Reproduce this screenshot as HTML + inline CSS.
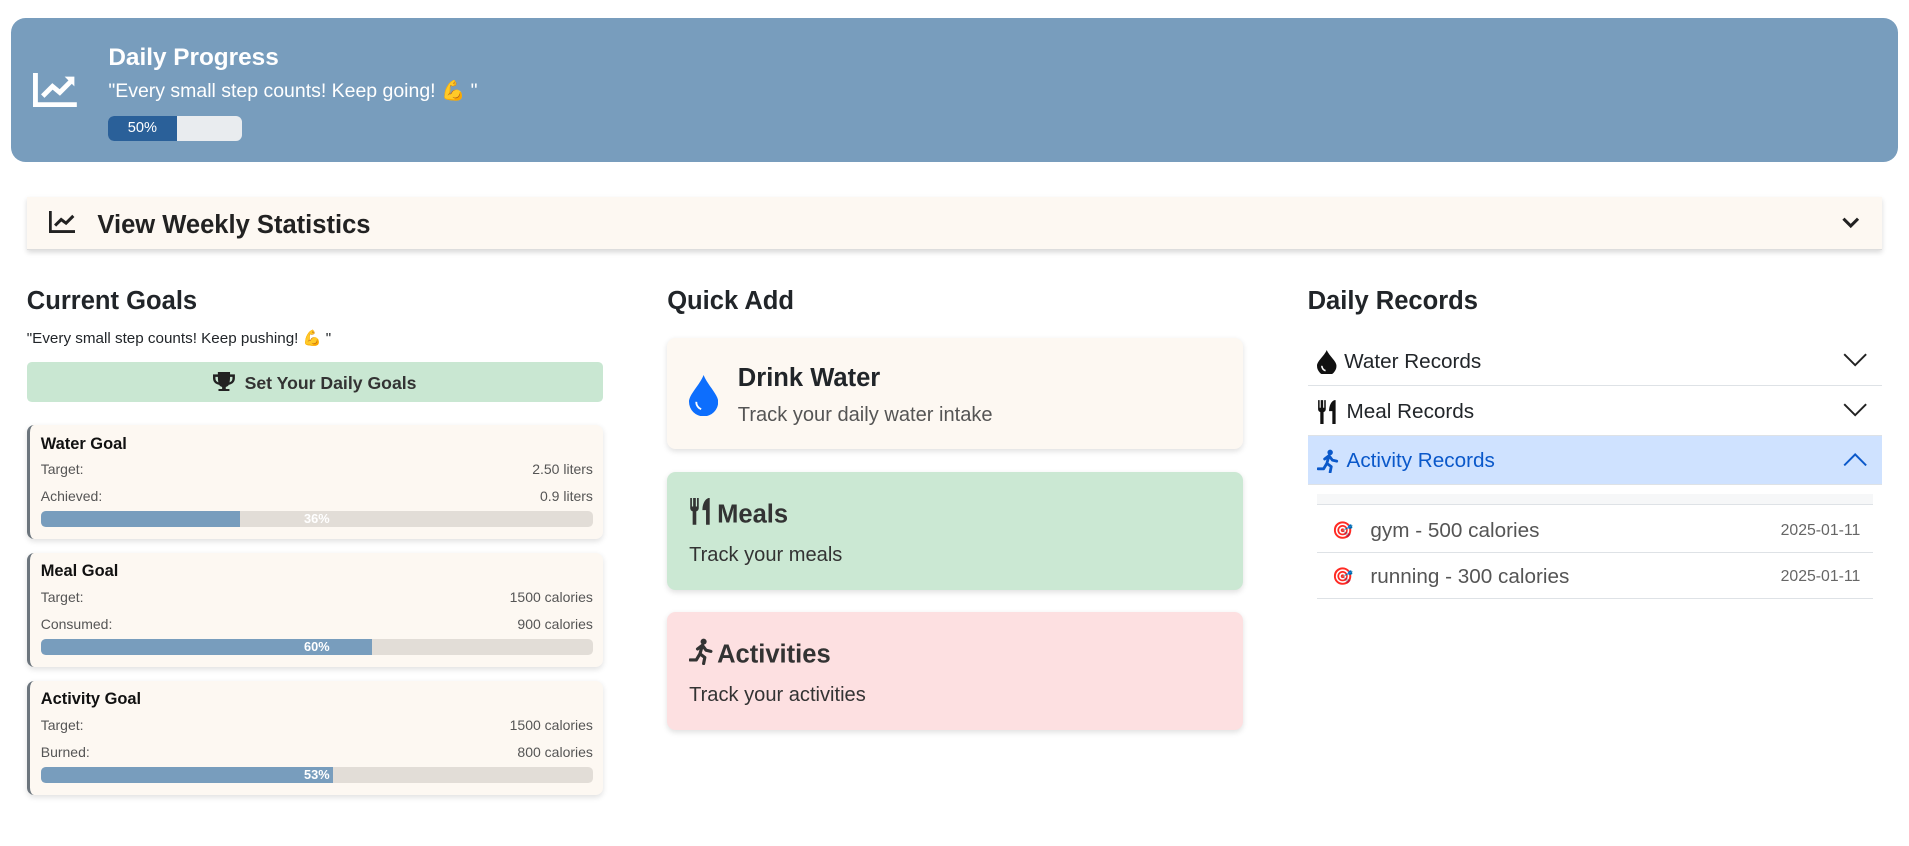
<!DOCTYPE html>
<html><head><meta charset="utf-8"><style>
*{box-sizing:border-box;margin:0;padding:0}
html,body{width:1909px;height:846px;overflow:hidden;background:#fff}
#w{width:1568px;height:695px;position:relative;zoom:1.2175;font-family:"Liberation Sans",sans-serif;color:#212529}
.a{position:absolute}
.hdr{left:9px;top:15px;width:1550px;height:118px;background:#789dbd;border-radius:12px;color:#fff}
.card{background:#fdf8f2;border-radius:6px;box-shadow:0 2px 5px rgba(0,0,0,.12)}
h2{font-size:21px;font-weight:600;position:absolute}
.goal{left:22px;width:473px;height:94px;border-left:3px solid #6c757d}
.goal b{position:absolute;left:9px;top:8px;font-size:13.5px;color:#111}
.goal .r{position:absolute;left:9px;right:8px;font-size:11.5px;color:#555;display:flex;justify-content:space-between}
.bar{position:absolute;left:9px;right:8px;top:71px;height:13px;background:#e2ddd7;border-radius:4px;overflow:hidden}
.bar i{display:block;height:100%;background:#789dbd}
.bar span{position:absolute;left:0;right:0;top:0;text-align:center;font-size:10.5px;line-height:13px;color:#fff;font-weight:bold}
.qa{left:548px;width:473px;border-radius:7px;box-shadow:0 2px 5px rgba(0,0,0,.12)}
.rec{left:1074px;width:472px;height:40px;border-bottom:1px solid #dee2e6;font-size:17px;display:flex;align-items:center;padding-left:8px;padding-top:2px}
.rec svg{margin-right:6px}
.rec svg.c{position:absolute;right:12px;top:13px;margin:0}
.it{left:1082px;width:456px;height:38px;border-bottom:1px solid #dee2e6;font-size:17px;color:#555;display:flex;align-items:center;padding-left:12px;padding-top:3px}
.it .d{position:absolute;right:10px;font-size:13px;color:#666}
.ic{display:inline-block;vertical-align:-2px;margin-right:3px}
</style></head><body><div id="w">
<div class="a hdr">
 <svg class="a" style="left:18px;top:45px" width="36" height="28" viewBox="0 0 36 28"><path d="M2 0v26h34" stroke="#fff" stroke-width="4" fill="none"/><path d="M8 19l8-8 6 5 10-10" stroke="#fff" stroke-width="4" fill="none"/><path d="M26 3h8v8z" fill="#fff"/></svg>
 <div class="a" style="left:80px;top:21px;font-size:20px;font-weight:600">Daily Progress</div>
 <div class="a" style="left:80px;top:50px;font-size:16px">"Every small step counts! Keep going! 💪 "</div>
 <div class="a" style="left:80px;top:80px;width:110px;height:21px;background:#e9ecef;border-radius:5px;overflow:hidden"><div style="width:56px;height:100%;background:#2a6099;font-size:12px;text-align:center;line-height:21px">50%</div></div>
</div>
<div class="a" style="left:22px;top:162px;width:1524px;height:43px;background:#fdf8f2;box-shadow:0 2px 4px rgba(0,0,0,.15);border-bottom:1px solid #ddd">
 <svg class="a" style="left:18px;top:11px" width="22" height="18" viewBox="0 0 22 18"><path d="M1 0v17h21" stroke="#222" stroke-width="2.5" fill="none"/><path d="M5 12l5-5 4 3 6-6" stroke="#222" stroke-width="2.5" fill="none"/></svg>
 <div class="a" style="left:58px;top:11px;font-size:21px;font-weight:600;color:#222">View Weekly Statistics</div>
 <svg class="a" style="left:1490px;top:15px" width="16" height="12" viewBox="0 0 16 12"><path d="M2 3l6 6 6-6" stroke="#222" stroke-width="2.5" fill="none"/></svg>
</div>
<h2 style="left:22px;top:236px">Current Goals</h2>
<div class="a" style="left:22px;top:270px;font-size:12.5px">"Every small step counts! Keep pushing! 💪 "</div>
<div class="a" style="left:22px;top:297px;width:473px;height:33px;background:#c9e7d2;border-radius:4px;font-size:14.5px;font-weight:600;color:#333;text-align:center;line-height:35px"><svg class="ic" width="18" height="16" viewBox="0 0 18 16" style="margin-right:8px"><path d="M4 0h10v2h4v3c0 3-2 5-5 5.5-.6 1-1.5 1.6-2.5 1.8V14h3v2H4.5v-2h3v-1.7C6.5 12.1 5.6 11.5 5 10.5 2 10 0 8 0 5V2h4zM2 4v1c0 2 1 3 2.4 3.5C4.1 7 4 5.5 4 4zm14 0h-2c0 1.5-.1 3-.4 4.5C15 8 16 7 16 5z" fill="#222"/></svg>Set Your Daily Goals</div>
<div class="a card goal" style="top:349px"><b>Water Goal</b><div class="r" style="top:30px"><span>Target:</span><span>2.50 liters</span></div><div class="r" style="top:52px"><span>Achieved:</span><span>0.9 liters</span></div><div class="bar"><i style="width:36%"></i><span>36%</span></div></div>
<div class="a card goal" style="top:454px"><b>Meal Goal</b><div class="r" style="top:30px"><span>Target:</span><span>1500 calories</span></div><div class="r" style="top:52px"><span>Consumed:</span><span>900 calories</span></div><div class="bar"><i style="width:60%"></i><span>60%</span></div></div>
<div class="a card goal" style="top:559px"><b>Activity Goal</b><div class="r" style="top:30px"><span>Target:</span><span>1500 calories</span></div><div class="r" style="top:52px"><span>Burned:</span><span>800 calories</span></div><div class="bar"><i style="width:53%"></i><span>53%</span></div></div>

<h2 style="left:548px;top:236px">Quick Add</h2>
<div class="a qa" style="top:278px;height:91px;background:#fdf8f2">
 <svg class="a" style="left:18px;top:30px" width="24" height="34" viewBox="0 0 24 34"><path d="M12 0C9 8 0 16 0 22a12 12 0 0024 0C24 16 15 8 12 0z" fill="#0d6efd"/><path d="M6 22a6 6 0 004 6" stroke="#fff" stroke-width="1.5" fill="none"/></svg>
 <div class="a" style="left:58px;top:21px;font-size:21px;font-weight:600">Drink Water</div>
 <div class="a" style="left:58px;top:54px;font-size:16.5px;color:#555">Track your daily water intake</div>
</div>
<div class="a qa" style="top:388px;height:97px;background:#cbe8d3">
 <div class="a" style="left:18px;top:21px;font-size:21px;font-weight:600;color:#333"><svg class="ic" width="20" height="22" viewBox="0 0 20 22"><path d="M1 0v8a3 3 0 002 3v11h3V11a3 3 0 002-3V0H6.6v7H5.6V0H3.4v7H2.4V0z" fill="#333"/><path d="M16 0c-3 1-5 5-5 10h3v12h3V0z" fill="#333"/></svg>Meals</div>
 <div class="a" style="left:18px;top:59px;font-size:16.5px;color:#333">Track your meals</div>
</div>
<div class="a qa" style="top:503px;height:97px;background:#fde0e1">
 <div class="a" style="left:18px;top:21px;font-size:21px;font-weight:600;color:#333"><svg class="ic" width="20" height="22" viewBox="0 0 20 22"><circle cx="12" cy="3" r="2.5" fill="#333"/><path d="M7 9l4-3 3 4 4 1M11 6l-2 7 4 3-1 5M9 13l-3 5H1" stroke="#333" stroke-width="2.6" fill="none" stroke-linecap="round" stroke-linejoin="round"/></svg>Activities</div>
 <div class="a" style="left:18px;top:59px;font-size:16.5px;color:#333">Track your activities</div>
</div>

<h2 style="left:1074px;top:236px">Daily Records</h2>
<div class="a rec" style="top:277px"><svg width="16" height="20" viewBox="0 0 16 20"><path d="M8 0C6 5 0 9 0 13a8 8 0 0016 0C16 9 10 5 8 0z" fill="#111"/><path d="M4 13a4 4 0 003 4" stroke="#fff" stroke-width="1.3" fill="none"/></svg>Water Records<svg class="c" width="20" height="12" viewBox="0 0 20 12"><path d="M1 1l9 9 9-9" stroke="#222" stroke-width="1.6" fill="none"/></svg></div>
<div class="a rec" style="top:318px"><svg width="18" height="20" viewBox="0 0 20 22"><path d="M1 0v8a3 3 0 002 3v11h3V11a3 3 0 002-3V0H6.6v7H5.6V0H3.4v7H2.4V0z" fill="#111"/><path d="M16 0c-3 1-5 5-5 10h3v12h3V0z" fill="#111"/></svg>Meal Records<svg class="c" width="20" height="12" viewBox="0 0 20 12"><path d="M1 1l9 9 9-9" stroke="#222" stroke-width="1.6" fill="none"/></svg></div>
<div class="a rec" style="top:358px;background:#cfe2ff;color:#0a58ca"><svg width="18" height="20" viewBox="0 0 20 22"><circle cx="12" cy="3" r="2.5" fill="#0a58ca"/><path d="M7 9l4-3 3 4 4 1M11 6l-2 7 4 3-1 5M9 13l-3 5H1" stroke="#0a58ca" stroke-width="2.6" fill="none" stroke-linecap="round" stroke-linejoin="round"/></svg>Activity Records<svg class="c" width="20" height="12" viewBox="0 0 20 12"><path d="M1 11l9-9 9 9" stroke="#0a58ca" stroke-width="1.6" fill="none"/></svg></div>
<div class="a" style="left:1082px;top:406px;width:456px;height:9px;background:#f6f7f8;border-bottom:1px solid #dee2e6"></div>
<div class="a it" style="top:416px"><span style="font-size:14px">🎯</span>&nbsp;&nbsp; gym - 500 calories<span class="d">2025-01-11</span></div>
<div class="a it" style="top:454px"><span style="font-size:14px">🎯</span>&nbsp;&nbsp; running - 300 calories<span class="d">2025-01-11</span></div>
</div></body></html>
